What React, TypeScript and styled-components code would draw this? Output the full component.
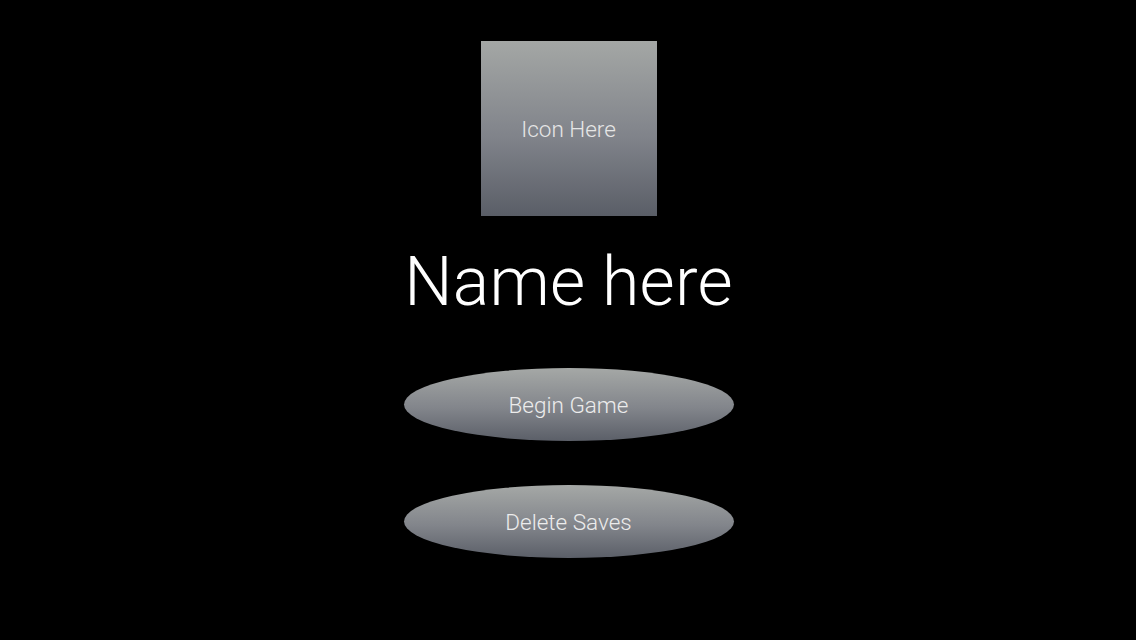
import styled, { createGlobalStyle } from 'styled-components';

const GlobalStyle = createGlobalStyle`
  html, body {
    margin: 0;
    padding: 0;
    background: #000;
  }
  body {
    font-family: Roboto, 'Liberation Sans', sans-serif;
  }
`;

const Screen = styled.div`
  display: flex;
  flex-direction: column;
  align-items: center;

  width: 100%;
  min-height: 100vh;
  padding-left: 1px;
  box-sizing: border-box;
  background: #000;
`;

const IconBox = styled.div`
  display: flex;
  align-items: center;
  justify-content: center;

  margin-top: 41px;
  width: 176px;
  height: 175px;

  background: linear-gradient(180deg, #a4a7a5 0%, #80838a 55%, #5a5e67 100%);

  color: #e6e6e6;
  font-size: 22.5px;
  font-weight: 300;
`;

const Title = styled.h1`
  margin: 28px 0 0;
  height: 76px;

  color: #fff;
  font-size: 68px;
  font-weight: 300;
  line-height: 76px;
  letter-spacing: 0.2px;
`;

const OvalButton = styled.button<{ $top: number }>`
  display: flex;
  align-items: center;
  justify-content: center;

  margin-top: ${p => p.$top}px;
  width: 330px;
  height: 73px;
  padding: 0;

  border: none;
  border-radius: 50%;
  background: linear-gradient(180deg, #a5a8a6 0%, #82858b 55%, #5b5f68 100%);

  color: #ececec;
  font-family: inherit;
  font-size: 22.5px;
  font-weight: 300;
  cursor: pointer;
`;

export default function App() {
  return (
    <>
      <GlobalStyle />
      <Screen>
        <IconBox>Icon Here</IconBox>
        <Title>Name here</Title>
        <OvalButton $top={48}>Begin Game</OvalButton>
        <OvalButton $top={44}>Delete Saves</OvalButton>
      </Screen>
    </>
  );
}
